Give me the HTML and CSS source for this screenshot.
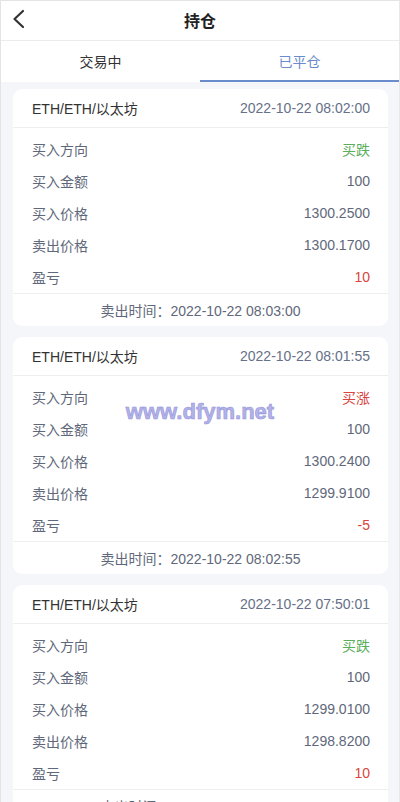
FILE: index.html
```html
<!DOCTYPE html>
<html lang="zh-CN">
<head>
<meta charset="utf-8">
<title>持仓</title>
<link rel="stylesheet" href="styles.css">
</head>
<body>
<div class="page">
  <header class="topbar">
    <svg class="back" width="14" height="20" viewBox="0 0 14 20"><path d="M11 2 L2.5 10 L11 18" fill="none" stroke="#333" stroke-width="2.2" stroke-linecap="round" stroke-linejoin="round"/></svg>
    <h1 class="title">持仓</h1>
  </header>
  <nav class="tabs">
    <div class="tab">交易中</div>
    <div class="tab active">已平仓</div>
  </nav>
  <main class="list">
    <section class="card">
      <div class="card-head"><span class="pair">ETH/ETH/以太坊</span><span class="time">2022-10-22 08:02:00</span></div>
      <div class="card-body">
        <div class="row"><span>买入方向</span><span class="green">买跌</span></div>
        <div class="row"><span>买入金额</span><span>100</span></div>
        <div class="row"><span>买入价格</span><span>1300.2500</span></div>
        <div class="row"><span>卖出价格</span><span>1300.1700</span></div>
        <div class="row"><span>盈亏</span><span class="red">10</span></div>
      </div>
      <div class="card-foot">卖出时间：2022-10-22 08:03:00</div>
    </section>
    <section class="card">
      <div class="card-head"><span class="pair">ETH/ETH/以太坊</span><span class="time">2022-10-22 08:01:55</span></div>
      <div class="card-body">
        <div class="row"><span>买入方向</span><span class="red">买涨</span></div>
        <div class="row"><span>买入金额</span><span>100</span></div>
        <div class="row"><span>买入价格</span><span>1300.2400</span></div>
        <div class="row"><span>卖出价格</span><span>1299.9100</span></div>
        <div class="row"><span>盈亏</span><span class="red">-5</span></div>
      </div>
      <div class="card-foot">卖出时间：2022-10-22 08:02:55</div>
    </section>
    <section class="card">
      <div class="card-head"><span class="pair">ETH/ETH/以太坊</span><span class="time">2022-10-22 07:50:01</span></div>
      <div class="card-body">
        <div class="row"><span>买入方向</span><span class="green">买跌</span></div>
        <div class="row"><span>买入金额</span><span>100</span></div>
        <div class="row"><span>买入价格</span><span>1299.0100</span></div>
        <div class="row"><span>卖出价格</span><span>1298.8200</span></div>
        <div class="row"><span>盈亏</span><span class="red">10</span></div>
      </div>
      <div class="card-foot">卖出时间：2022-10-22 07:51:01</div>
    </section>
  </main>
  <div class="watermark">www.dfym.net</div>
</div>
</body>
</html>
```

FILE: styles.css
```css
* { box-sizing: border-box; }
html, body {
  margin: 0;
  padding: 0;
  height: 100%;
  overflow: hidden;
}
body {
  font-family: "Liberation Sans", "Noto Sans CJK SC", Arial, sans-serif;
  font-size: 14px;
  background: #f4f6fa;
  color: #5f687a;
}
.page {
  position: relative;
  min-height: 100%;
  border-top: 1px solid #e4e4e4;
  border-left: 1px solid #e4e4e4;
  border-right: 1px solid #e8e8e8;
}
.topbar {
  position: relative;
  height: 40px;
  background: #fff;
  border-bottom: 1px solid #ececec;
  display: flex;
  align-items: center;
  justify-content: center;
  padding-bottom: 2px;
}
.back {
  position: absolute;
  left: 11px;
  top: 8px;
}
.title {
  margin: 0;
  font-size: 16px;
  font-weight: bold;
  color: #222;
}
.tabs {
  display: flex;
  height: 41px;
  background: #fff;
}
.tab {
  flex: 1;
  display: flex;
  align-items: center;
  justify-content: center;
  color: #333;
  font-size: 14px;
  border-bottom: 2px solid transparent;
}
.tab.active {
  color: #6a8ccc;
  border-bottom-color: #6a8ccc;
}
.list {
  padding: 7px 11px 0 12px;
  display: flex;
  flex-direction: column;
  gap: 11px;
}
.card {
  background: #fff;
  border-radius: 9px;
  overflow: hidden;
}
.card-head {
  height: 39px;
  display: flex;
  align-items: center;
  justify-content: space-between;
  padding: 0 18px 1px 19px;
  border-bottom: 1px solid #eeeeee;
}
.pair { color: #333; }
.time { color: #667088; }
.card-body {
  padding: 5px 18px 0 19px;
}
.row {
  height: 32px;
  display: flex;
  align-items: center;
  justify-content: space-between;
  color: #5f687a;
  padding-bottom: 1px;
}
.green { color: #5aae5c; }
.red { color: #d8443e; }
.card-foot {
  height: 33px;
  border-top: 1px solid #eeeeee;
  display: flex;
  align-items: center;
  justify-content: center;
  color: #5f687a;
}
.watermark {
  position: absolute;
  left: 0;
  right: 0;
  top: 398px;
  text-align: center;
  font-family: "Liberation Sans", Arial, sans-serif;
  font-weight: bold;
  font-size: 22px;
  color: #b2b2ea;
  -webkit-text-stroke: 0.6px #9595d8;
  pointer-events: none;
}
```
